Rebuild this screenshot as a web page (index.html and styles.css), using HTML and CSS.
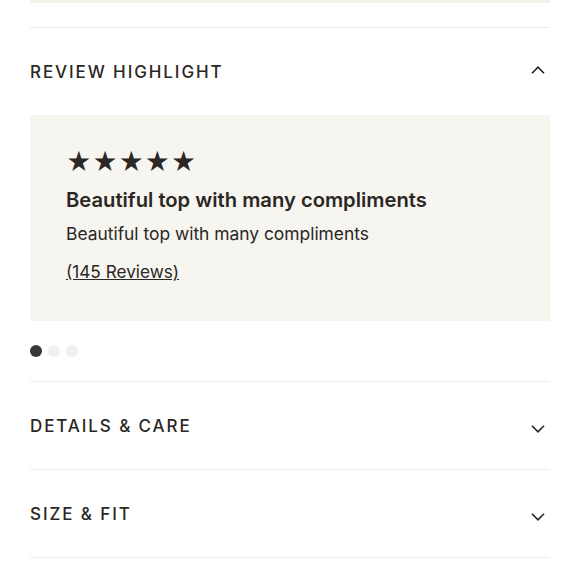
FILE: index.html
```html
<!DOCTYPE html>
<html lang="en">
<head>
    <meta charset="UTF-8">
    <meta name="viewport" content="width=device-width, initial-scale=1.0">
    <title>Product Details</title>
    <link rel="stylesheet" href="styles.css">
</head>
<body>
    <div class="page">
        <div class="prev-block"></div>

        <div class="section first">
            <div class="section-head">
                <h2 class="section-title">REVIEW HIGHLIGHT</h2>
                <svg class="chevron" width="14" height="8" viewBox="0 0 14 8"><path d="M1 7.2 L7 1.2 L13 7.2" fill="none" stroke="#222" stroke-width="1.6"/></svg>
            </div>
            <div class="review-card">
                <div class="stars">★★★★★</div>
                <div class="review-title">Beautiful top with many compliments</div>
                <div class="review-body">Beautiful top with many compliments</div>
                <a class="review-link" href="#">(145 Reviews)</a>
            </div>
            <div class="dots">
                <span class="dot active"></span>
                <span class="dot"></span>
                <span class="dot"></span>
            </div>
        </div>

        <div class="section">
            <div class="section-head">
                <h2 class="section-title">DETAILS &amp; CARE</h2>
                <svg class="chevron down" width="14" height="8" viewBox="0 0 14 8"><path d="M1 0.8 L7 6.8 L13 0.8" fill="none" stroke="#222" stroke-width="1.6"/></svg>
            </div>
        </div>

        <div class="section">
            <div class="section-head">
                <h2 class="section-title">SIZE &amp; FIT</h2>
                <svg class="chevron down" width="14" height="8" viewBox="0 0 14 8"><path d="M1 0.8 L7 6.8 L13 0.8" fill="none" stroke="#222" stroke-width="1.6"/></svg>
            </div>
        </div>
    </div>
</body>
</html>
```

FILE: styles.css
```css
body {
    margin: 0;
    background: #fff;
    font-family: Inter, "Liberation Sans", sans-serif;
    color: #2a2724;
}
.page {
    padding: 0 30px;
}
.prev-block {
    height: 3px;
    background: #f4f2ec;
    margin-bottom: 24px;
}
.section {
    border-bottom: 1px solid #ececec;
}
.section.first {
    border-top: 1px solid #ececec;
}
.section-head {
    height: 87px;
    display: flex;
    align-items: center;
    justify-content: space-between;
}
.section-title {
    margin: 0;
    font-size: 17px;
    font-weight: 500;
    letter-spacing: 1.9px;
}
.chevron {
    margin-right: 5px;
    margin-top: -4px;
}
.chevron.down {
    margin-top: 6px;
}
.review-card {
    background: #f6f5ef;
    height: 206px;
    box-sizing: border-box;
    padding: 32px 36px 0;
}
.stars {
    font-size: 24.5px;
    letter-spacing: 0.6px;
    line-height: 30px;
    color: #2a2724;
}
.review-title {
    margin-top: 10px;
    font-size: 20.2px;
    font-weight: 600;
}
.review-body {
    margin-top: 11px;
    font-size: 17.4px;
}
.review-link {
    display: inline-block;
    margin-top: 17px;
    font-size: 17.2px;
    color: #2a2724;
}
.dots {
    display: flex;
    gap: 6px;
    padding: 24px 0;
}
.dot {
    width: 12px;
    height: 12px;
    border-radius: 50%;
    background: #f0f0f0;
}
.dot.active {
    background: #3a3735;
}
```
